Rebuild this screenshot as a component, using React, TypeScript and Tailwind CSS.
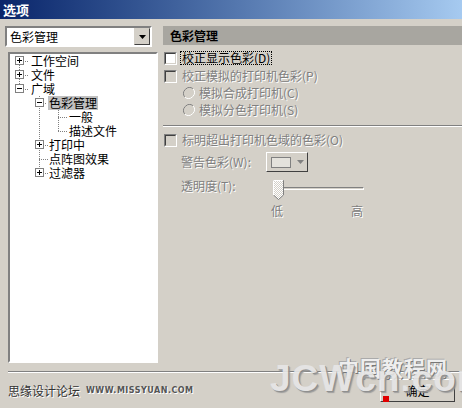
import React from 'react';

const cjk = { fontFamily: "'Noto Sans CJK SC', 'Liberation Sans', sans-serif" };

const dis = 'text-[#808080] [text-shadow:1px_1px_0_#ffffff]';

function Box({ open }: { open: boolean }) {
  return (
    <svg width="9" height="9" className="block">
      <rect x="0.5" y="0.5" width="8" height="8" fill="#fff" stroke="#808080" />
      <line x1="2" y1="4.5" x2="7" y2="4.5" stroke="#000" />
      {!open && <line x1="4.5" y1="2" x2="4.5" y2="7" stroke="#000" />}
    </svg>
  );
}

const treeRows = [
  { label: '工作空间', level: 0, box: 'plus' },
  { label: '文件', level: 0, box: 'plus' },
  { label: '广域', level: 0, box: 'minus' },
  { label: '色彩管理', level: 1, box: 'minus', selected: true },
  { label: '一般', level: 2 },
  { label: '描述文件', level: 2 },
  { label: '打印中', level: 1, box: 'plus' },
  { label: '点阵图效果', level: 1 },
  { label: '过滤器', level: 1, box: 'plus' },
];

function Tree() {
  const dot = { stroke: '#808080', strokeDasharray: '1 1' };
  return (
    <div className="relative ml-[3px] mt-[5px] h-[311px] w-[150px] border-2 border-t-[#808080] border-l-[#808080] border-r-white border-b-white bg-white">
      <svg className="absolute left-0 top-0" width="146" height="140">
        {/* level 0 */}
        <line x1="9.5" y1="7" x2="9.5" y2="35" {...dot} />
        <line x1="13" y1="7.5" x2="19" y2="7.5" {...dot} />
        <line x1="13" y1="21.5" x2="19" y2="21.5" {...dot} />
        <line x1="13" y1="35.5" x2="19" y2="35.5" {...dot} />
        {/* level 1 */}
        <line x1="29.5" y1="42" x2="29.5" y2="119" {...dot} />
        <line x1="33" y1="49.5" x2="37" y2="49.5" {...dot} />
        <line x1="33" y1="91.5" x2="39" y2="91.5" {...dot} />
        <line x1="29" y1="105.5" x2="39" y2="105.5" {...dot} />
        <line x1="33" y1="119.5" x2="39" y2="119.5" {...dot} />
        {/* level 2 */}
        <line x1="48.5" y1="54" x2="48.5" y2="77" {...dot} />
        <line x1="48" y1="63.5" x2="58" y2="63.5" {...dot} />
        <line x1="48" y1="77.5" x2="58" y2="77.5" {...dot} />
      </svg>
      <div className="relative flex flex-col">
        {treeRows.map((r) => {
          const boxLeft = r.level === 0 ? 'left-[5px]' : 'left-[25px]';
          const padL = r.level === 0 ? 'pl-[20px]' : r.level === 1 ? 'pl-[38px]' : 'pl-[58px]';
          return (
            <div key={r.label} className={`relative flex h-[14px] items-center ${padL}`}>
              {r.box && (
                <span className={`absolute top-[2px] ${boxLeft}`}>
                  <Box open={r.box === 'minus'} />
                </span>
              )}
              <span
                className={`px-[1px] text-[12px] leading-[14px] text-black ${r.selected ? 'bg-[#c0c0c0]' : ''}`}
              >
                {r.label}
              </span>
            </div>
          );
        })}
      </div>
    </div>
  );
}

function Check({ disabled }: { disabled?: boolean }) {
  return (
    <span
      className={`block h-[13px] w-[13px] shrink-0 border border-t-[#808080] border-l-[#808080] border-r-white border-b-white ${
        disabled ? 'bg-[#d4d0c8]' : 'bg-white'
      }`}
    >
      <span className="block h-full w-full border border-t-[#404040] border-l-[#404040] border-r-[#d4d0c8] border-b-[#d4d0c8]" />
    </span>
  );
}

function Radio() {
  return (
    <svg width="12" height="12" className="block shrink-0">
      <path d="M10.2 1.8 A6 6 0 0 0 1.8 10.2" fill="none" stroke="#808080" />
      <path d="M1.8 10.2 A6 6 0 0 0 10.2 1.8" fill="none" stroke="#ffffff" />
      <circle cx="6" cy="6" r="4.5" fill="#d4d0c8" />
    </svg>
  );
}

export default function App() {
  return (
    <div
      className="relative h-[408px] w-[462px] overflow-hidden bg-[#d4d0c8] text-[12px] leading-[14px] text-black"
      style={cjk}
    >
      <div className="flex h-[19px] items-center bg-gradient-to-r from-[#0a246a] to-[#a6caf0] pl-[3px]">
        <span className="text-[13px] font-bold text-white">选项</span>
      </div>

      <div className="flex h-[352px] pt-[7px]">
        <div className="w-[158px] shrink-0 pl-[5px]">
          <div className="flex h-[21px] w-[147px] items-center border-2 border-t-[#808080] border-l-[#808080] border-r-white border-b-white bg-white">
            <span className="flex-1 pl-[3px] text-[12px]">色彩管理</span>
            <span className="flex h-[17px] w-[16px] items-center justify-center border border-t-[#d4d0c8] border-l-[#d4d0c8] border-r-[#404040] border-b-[#404040] bg-[#d4d0c8]">
              <svg width="7" height="4">
                <path d="M0 0 H7 L3.5 4 Z" fill="#000" />
              </svg>
            </span>
          </div>
          <Tree />
        </div>

        <div className="ml-[5px] flex-1">
          <div className="flex h-[19px] items-center bg-[#a8a6a0] pl-[7px]">
            <span className="text-[12px] font-bold">色彩管理</span>
          </div>

          <div className="ml-[1px] mt-[6px] flex h-[14px] items-center gap-[3px]">
            <Check />
            <span className="border border-dotted border-black px-[1px] leading-[12px]">校正显示色彩(D)</span>
          </div>
          <div className="ml-[1px] mt-[4px] flex h-[14px] items-center gap-[5px]">
            <Check disabled />
            <span className={dis}>校正模拟的打印机色彩(P)</span>
          </div>
          <div className="ml-[20px] mt-[3px] flex h-[14px] items-center gap-[4px]">
            <Radio />
            <span className={dis}>模拟合成打印机(C)</span>
          </div>
          <div className="ml-[20px] mt-[3px] flex h-[14px] items-center gap-[4px]">
            <Radio />
            <span className={dis}>模拟分色打印机(S)</span>
          </div>

          <div className="mt-[8px] h-[2px] border-t border-b border-t-[#808080] border-b-white" />

          <div className="ml-[1px] mt-[6px] flex h-[14px] items-center gap-[5px]">
            <Check disabled />
            <span className={dis}>标明超出打印机色域的色彩(O)</span>
          </div>

          <div className="ml-[18px] mt-[5px] flex h-[20px] items-center">
            <span className={`w-[85px] ${dis}`}>警告色彩(W):</span>
            <span className="flex h-[20px] w-[42px] items-center border border-t-white border-l-white border-r-[#404040] border-b-[#404040] pl-[4px]">
              <span className="h-[11px] w-[20px] border border-[#808080] bg-[#e4e2dc]" />
              <svg width="7" height="4" className="ml-[6px]">
                <path d="M0 0 H7 L3.5 4 Z" fill="#808080" />
              </svg>
            </span>
          </div>

          <div className="ml-[18px] mt-[8px] flex h-[20px] items-start">
            <span className={`mt-[-1px] w-[92px] ${dis}`}>透明度(T):</span>
            <svg width="11" height="20" className="shrink-0">
              <defs>
                <pattern id="chk" width="2" height="2" patternUnits="userSpaceOnUse">
                  <rect width="2" height="2" fill="#ffffff" />
                  <rect width="1" height="1" fill="#d4d0c8" />
                  <rect x="1" y="1" width="1" height="1" fill="#d4d0c8" />
                </pattern>
              </defs>
              <path d="M0.5 0.5 H10.5 V15 L5.5 19.5 L0.5 15 Z" fill="url(#chk)" stroke="#808080" />
              <path d="M0.5 15 V0.5 H10" fill="none" stroke="#ffffff" />
            </svg>
            <span className="mt-[7px] h-[3px] w-[80px] border-t border-b border-t-[#808080] border-b-white border-r border-r-white" />
          </div>

          <div className="ml-[108px] mt-[4px] flex h-[14px] w-[92px] justify-between">
            <span className={dis}>低</span>
            <span className={dis}>高</span>
          </div>
        </div>
      </div>

      <div className="ml-[8px] h-[2px] border-t border-b border-t-[#808080] border-b-white" />

      <div className="flex h-[35px] items-center pl-[8px]">
        <span className="text-[12px] text-[#333] [text-shadow:1px_1px_0_#ffffff]">思缘设计论坛</span>
        <span
          className="ml-[6px] text-[8px] font-bold tracking-[0.5px] text-[#555] [text-shadow:1px_1px_0_#ffffff]"
          style={{ fontFamily: "'DejaVu Sans', sans-serif" }}
        >
          WWW.MISSYUAN.COM
        </span>
        <span className="ml-auto mr-[7px] flex h-[23px] w-[75px] items-center justify-center border border-t-white border-l-white border-r-[#404040] border-b-[#404040] bg-[#d4d0c8]">
          确定
        </span>
      </div>

      <div className="h-[2px] border-t border-[#808080]" />

      {/* watermark overlay */}
      <div
        className="pointer-events-none absolute left-[338px] top-[360px] text-[21px] font-bold tracking-[1px] text-[#eeeeee] [text-shadow:1px_1px_0_#777,-1px_-1px_0_#aaa]"
        style={cjk}
      >
        中国教程网
      </div>
      <div
        className="pointer-events-none absolute left-[270px] top-[372px] text-[37px] font-bold tracking-[1px] text-[#e6e6e6] opacity-90 [text-shadow:1px_1px_0_#888,2px_2px_1px_#999]"
        style={{ fontFamily: "'Liberation Sans', Arial, sans-serif" }}
      >
        JCWcn.com
      </div>
      <div className="absolute left-[383px] top-[396px] h-[6px] w-[6px] bg-[#e00000]" />
    </div>
  );
}
